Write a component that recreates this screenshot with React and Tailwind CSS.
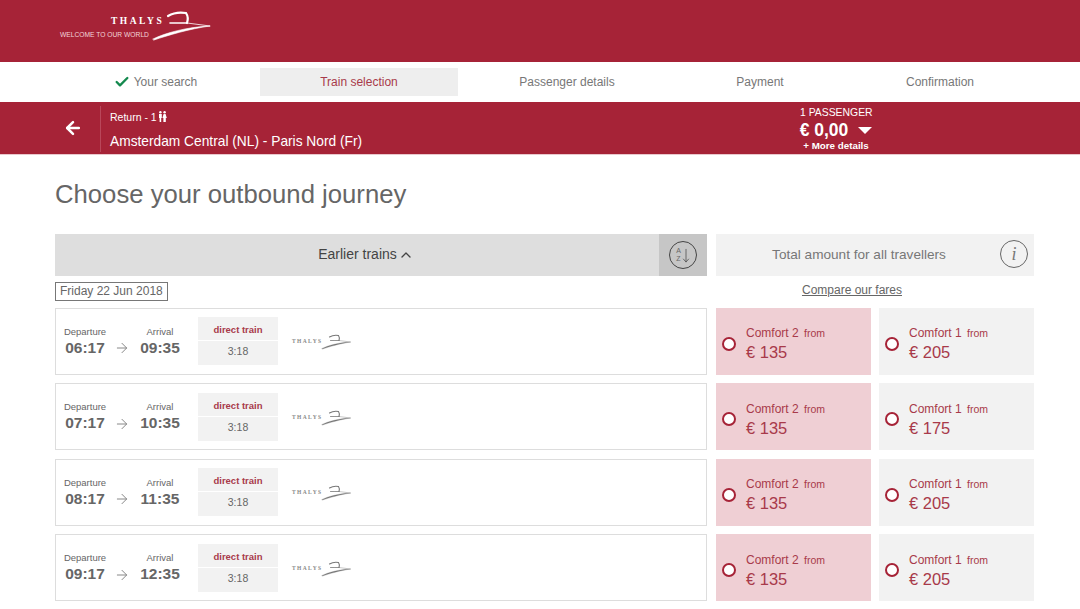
import { ArrowLeft, ArrowRight, Check, ChevronUp } from 'lucide-react';

const TRAINS = [
  { dep: '06:17', arr: '09:35', comfort1: '€ 205' },
  { dep: '07:17', arr: '10:35', comfort1: '€ 175' },
  { dep: '08:17', arr: '11:35', comfort1: '€ 205' },
  { dep: '09:17', arr: '12:35', comfort1: '€ 205' },
];

const STEPS = [
  { label: 'Your search', width: 'w-[205px]', className: 'pr-[4px]', done: true },
  { label: 'Train selection', width: 'w-[198px]', className: 'bg-[#eeeeee] text-[#a83a4a]' },
  { label: 'Passenger details', width: 'w-[218px]' },
  { label: 'Payment', width: 'w-[168px]' },
  { label: 'Confirmation', width: 'w-[192px]' },
];

function TrainMark({ className, color = '#ffffff' }) {
  return (
    <svg viewBox="0 0 70 34" className={className} fill="none" stroke={color} strokeLinecap="round">
      <path d="M23 8 C28 5 35 4 41 5 C43 8 43 12 42 15" strokeWidth="2.2" />
      <path d="M25 15 C31 15 37 15 42 15" strokeWidth="1.6" />
      <path d="M42 15 L65 18" strokeWidth="0.8" />
      <path d="M8 31 C20 25 42 19 65 18 C44 21 24 27 9 32 Z" fill={color} strokeWidth="0.6" />
    </svg>
  );
}

function PersonIcon() {
  return (
    <svg viewBox="0 0 9 11" className="inline-block w-[9px] h-[11px] ml-[1px] -mt-[2px]" fill="#ffffff">
      <circle cx="2.4" cy="1.3" r="1.2" />
      <circle cx="6.6" cy="1.3" r="1.2" />
      <path d="M1 3 H3.8 V7 H3.2 V11 H1.6 V7 H1 Z" />
      <path d="M5.6 3 H7.6 L8.8 7 H7.8 V11 H5.4 V7 H4.4 Z" />
    </svg>
  );
}

function FareCell({ name, price, tint }) {
  return (
    <div className={`flex items-center w-[155px] h-full pl-[6px] text-[#a83a4a] ${tint}`}>
      <span className="w-[14px] h-[14px] rounded-full border-2 border-[#a62337] bg-white shrink-0 mt-[5px]" />
      <div className="ml-[10px] mt-[6px]">
        <div className="text-[12px] leading-[16px]">
          {name} <span className="ml-[2px] text-[10.5px]">from</span>
        </div>
        <div className="text-[16.5px] leading-[22px]">{price}</div>
      </div>
    </div>
  );
}

function TrainRow({ train }) {
  return (
    <div className="flex h-[67px] mb-[8.5px]">
      <div className="flex items-center w-[652px] mr-[9px] h-full border border-[#dddddd] bg-white pl-[4px] text-[#666666]">
        <div className="w-[50px] text-center">
          <div className="text-[9.5px] leading-[13px]">Departure</div>
          <div className="text-[15.5px] leading-[20px] font-bold">{train.dep}</div>
        </div>
        <ArrowRight className="w-[16px] h-[16px] ml-[4px] mt-[14px] text-[#888888]" strokeWidth={1.5} />
        <div className="w-[46px] ml-[7px] text-center">
          <div className="text-[9.5px] leading-[13px]">Arrival</div>
          <div className="text-[15.5px] leading-[20px] font-bold">{train.arr}</div>
        </div>
        <div className="w-[80px] h-[48px] ml-[15px] flex flex-col bg-[#f2f2f2] text-center">
          <div className="h-[24px] border-b border-white text-[#a83a4a] font-bold text-[9.5px] leading-[26px]">direct train</div>
          <div className="flex-1 text-[10.5px] leading-[21px]">3:18</div>
        </div>
        <div className="ml-[14px] flex items-center">
          <span className="w-[31px] text-[5.5px] tracking-[1.4px] font-['Liberation_Serif',serif] font-bold text-[#888888]">THALYS</span>
          <TrainMark className="w-[35px] h-[17px] -ml-[5px] mt-[1px]" color="#777777" />
        </div>
      </div>
      <FareCell name="Comfort 2" price="€ 135" tint="bg-[#efcfd4] mr-[8px]" />
      <FareCell name="Comfort 1" price={train.comfort1} tint="bg-[#f2f2f2]" />
    </div>
  );
}

export default function App() {
  return (
    <div className="w-[1080px] h-[609px] overflow-hidden bg-white font-['Liberation_Sans',Arial,sans-serif]">
      {/* Header */}
      <div className="h-[62px] bg-[#a62337] pl-[60px] pt-[8px] text-white">
        <div className="flex items-start">
          <div className="w-[87px] pt-[7px]">
            <div className="pl-[51px] font-['Liberation_Serif',serif] font-bold text-[9.5px] leading-[12px] tracking-[2.5px] whitespace-nowrap">THALYS</div>
            <div className="mt-[4px] text-[6.7px] leading-[8px] whitespace-nowrap text-[#f3d5da]">WELCOME TO OUR WORLD</div>
          </div>
          <TrainMark className="w-[70px] h-[34px] -ml-[2px]" />
        </div>
      </div>

      {/* Steps */}
      <div className="h-[40px] flex items-center pl-[55px] text-[12px] text-[#777777]">
        {STEPS.map(step => (
          <div key={step.label} className={`${step.width} h-[28px] flex items-center justify-center ${step.className || ''}`}>
            {step.done && <Check className="w-[16px] h-[16px] mr-[4px] text-[#14894e]" strokeWidth={3.5} />}
            {step.label}
          </div>
        ))}
      </div>

      {/* Journey bar */}
      <div className="h-[53px] flex items-center bg-[#a62337] border-b border-[#e9c8cd] text-white">
        <ArrowLeft className="w-[20px] h-[20px] ml-[63px]" strokeWidth={3} />
        <div className="ml-[17px] w-[438px] h-[46px] mt-[1px] pl-[9px] border-l border-[#b9475a]">
          <div className="text-[10.5px] leading-[14px] mt-[4px]">Return - 1<PersonIcon /></div>
          <div className="text-[13.75px] leading-[18px] mt-[9px]">Amsterdam Central (NL) - Paris Nord (Fr)</div>
        </div>
        <div className="ml-[262px] w-[72px] pt-[2px] text-center">
          <div className="text-[10.4px] leading-[12px] whitespace-nowrap">1 PASSENGER</div>
          <div className="flex items-center justify-center text-[17.5px] leading-[21px] mt-[1px] font-bold whitespace-nowrap">
            € 0,00
            <span className="ml-[10px] w-0 h-0 border-x-[7px] border-x-transparent border-t-[7px] border-t-white" />
          </div>
          <div className="text-[9.8px] leading-[12px] -mt-[1px] font-bold whitespace-nowrap">+ More details</div>
        </div>
      </div>

      <div className="pl-[55px]">
        <h1 className="h-[79px] pt-[23px] text-[25.7px] leading-[32px] text-[#666666]">Choose your outbound journey</h1>

        {/* Table head */}
        <div className="grid grid-cols-[652px_318px] gap-x-[9px] h-[42px] text-[#666666]">
          <div className="flex items-center bg-[#dedede]">
            <div className="flex-1 flex items-center justify-center pl-[18px] pb-[1px] text-[14px] text-[#444444]">
              Earlier trains
              <ChevronUp className="w-[16px] h-[16px] ml-[1px]" strokeWidth={2} />
            </div>
            <div className="w-[48px] h-full flex items-center justify-center bg-[#c6c6c6]">
              <div className="w-[28px] h-[28px] rounded-full border-[1.5px] border-[#444444] flex items-center justify-center">
                <div className="text-[7px] leading-[8px] text-center">A<br />Z</div>
                <svg viewBox="0 0 8 16" className="w-[8px] h-[15px] ml-[1px]" fill="none" stroke="#555555" strokeWidth="0.9">
                  <path d="M4 1 V15 M1 11.5 L4 15 L7 11.5" />
                </svg>
              </div>
            </div>
          </div>
          <div className="relative flex items-center justify-center bg-[#f2f2f2] text-[13.6px] pr-[32px] text-[#777777]">
            Total amount for all travellers
            <span className="absolute right-[6px] top-[6px] w-[28px] h-[28px] rounded-full border border-[#666666] flex items-center justify-center font-['Liberation_Serif',serif] italic text-[18px]">i</span>
          </div>
        </div>

        {/* Date and compare */}
        <div className="grid grid-cols-[652px_318px] gap-x-[9px] h-[31.9px] pt-[6px] text-[12px] text-[#666666]">
          <div>
            <span className="inline-block h-[19px] w-[113px] border border-[#777777] pl-[4px] leading-[17px]">Friday 22 Jun 2018</span>
          </div>
          <div className="pr-[46px] text-center underline leading-[16px]">Compare our fares</div>
        </div>

        {TRAINS.map(train => (
          <TrainRow key={train.dep} train={train} />
        ))}
      </div>
    </div>
  );
}
